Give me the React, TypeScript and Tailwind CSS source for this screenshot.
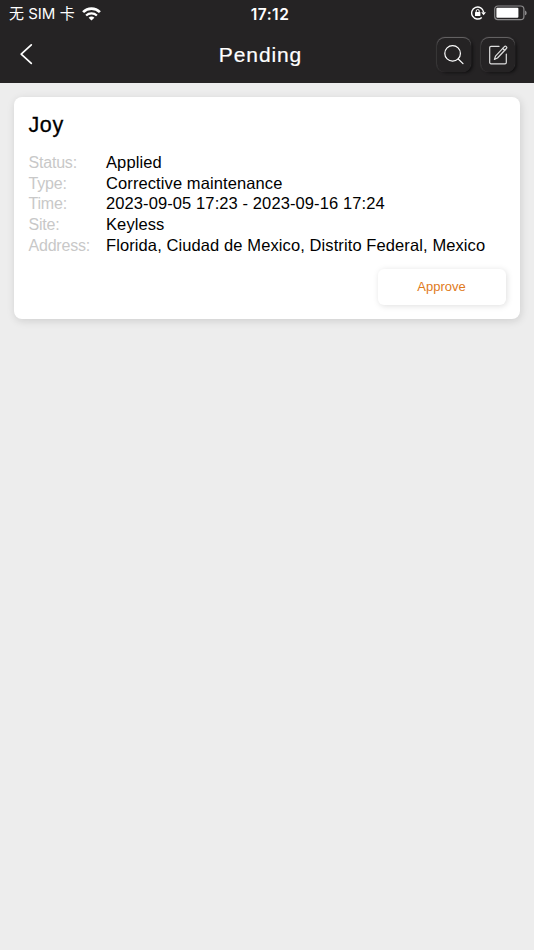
const details = [
  { label: 'Status:', value: 'Applied' },
  { label: 'Type:', value: 'Corrective maintenance' },
  { label: 'Time:', value: '2023-09-05 17:23 - 2023-09-16 17:24' },
  { label: 'Site:', value: 'Keyless' },
  { label: 'Address:', value: 'Florida, Ciudad de Mexico, Distrito Federal, Mexico' },
];

function StatusBar() {
  return (
    <div className="grid h-7 grid-cols-[1fr_auto_1fr] items-center pl-[9px] pr-[7px] text-white">
      <div className="flex items-center gap-[7px]">
        <span className="whitespace-nowrap font-[Inter,'Noto_Sans_CJK_SC',sans-serif] text-[15px] leading-7">
          无 SIM 卡
        </span>
        <svg width="19" height="14" viewBox="0 0 19 14" fill="none" stroke="currentColor" className="-mt-px">
          <path d="M1.1 5.1C5.7.5 13.3.5 17.9 5.1" strokeWidth="2.7" />
          <path d="M4.1 8.5c3-2.9 7.8-2.9 10.8 0" strokeWidth="2.2" />
          <path d="M9.5 13.6 6.6 10.8c1.6-1.6 4.2-1.6 5.8 0Z" fill="currentColor" stroke="none" />
        </svg>
      </div>
      <span className="ml-1 mt-px font-[Inter,sans-serif] text-[15.5px] font-semibold tracking-[0.5px]">17:12</span>
      <div className="flex items-center justify-end gap-2">
        {/* Orientation lock */}
        <svg width="15" height="14" viewBox="0 0 15 14" fill="none" stroke="currentColor" className="-mt-0.5">
          <path d="M12.6 6.2A6 6 0 1 0 10.8 11.4" strokeWidth="1.4" />
          <path d="M10.2 6.2h4.8l-2.4 3.1Z" fill="currentColor" stroke="none" />
          <rect x="4" y="6.1" width="5.4" height="4" rx=".5" fill="currentColor" stroke="none" />
          <path d="M5.2 6.4V5a1.5 1.5 0 0 1 3 0v1.4" strokeWidth="1" />
        </svg>
        {/* Battery */}
        <svg width="33" height="16" viewBox="0 0 33 16" fill="none" className="-mt-0.5">
          <rect x=".7" y="1" width="29.2" height="13.6" rx="3.2" stroke="#8b8a8b" strokeWidth="1.2" />
          <rect x="2.4" y="2.8" width="22" height="10" rx="1" fill="#fff" />
          <path d="M31 5.5c2.2.8 2.2 4 0 4.8Z" fill="#8b8a8b" />
        </svg>
      </div>
    </div>
  );
}

function Header() {
  return (
    <header className="h-[83px] bg-[#252324] text-white">
      <StatusBar />
      <div className="grid h-[54px] grid-cols-[1fr_auto_1fr] items-center pl-[19px] pr-[19px]">
        <button type="button" aria-label="Back" className="-mt-0.5 w-fit">
          <svg width="14" height="22" viewBox="0 0 14 22" fill="none" stroke="currentColor" strokeWidth="1.7" strokeLinecap="round" strokeLinejoin="round">
            <path d="M12.3 1.8 2.2 11.2 12.3 20.4" />
          </svg>
        </button>
        <h1 className="mr-[13px] text-[21px] tracking-[0.9px] [-webkit-text-stroke:0.2px]">Pending</h1>
        <div className="flex justify-end gap-2.5">
          <button
            type="button"
            aria-label="Search"
            className="flex size-[34px] items-center justify-center rounded-lg bg-[#252324] shadow-[0_-1px_1px_#6b696a,-1px_0_1px_#353334,2px_1px_3px_#121112]"
          >
            <svg width="20" height="20" viewBox="0 0 20 20" fill="none" stroke="currentColor" strokeWidth="1.2" strokeLinecap="round">
              <circle cx="8.6" cy="8.4" r="7.8" />
              <path d="m14.2 14 4.8 4.6" />
            </svg>
          </button>
          <button
            type="button"
            aria-label="Edit"
            className="flex size-[34px] items-center justify-center rounded-lg bg-[#252324] shadow-[0_-1px_1px_#6b696a,-1px_0_1px_#353334,2px_1px_3px_#121112]"
          >
            <svg width="20" height="20" viewBox="0 0 20 20" fill="none" stroke="#dedede" strokeWidth="1.2" strokeLinecap="round" strokeLinejoin="round">
              <path d="M11 1.4H3A1.3 1.3 0 0 0 1.7 2.7v14.8A1.3 1.3 0 0 0 3 18.8h14a1.3 1.3 0 0 0 1.3-1.3V9" />
              <path d="M6.4 14.4 7.5 11.2 16.4 1.7a1.3 1.3 0 0 1 2 1.8L9.5 13Z" />
              <path d="m14.7 3.5 2 1.8" />
            </svg>
          </button>
        </div>
      </div>
    </header>
  );
}

export default function App() {
  return (
    <div className="min-h-screen bg-[#ededed] font-['Liberation_Sans',Arial,sans-serif]">
      <Header />

      <main className="px-3.5 pt-3.5">
        <section className="h-[222px] rounded-lg bg-white px-[14.5px] pt-[14px] text-black shadow-[1px_2px_8px_rgba(0,0,0,0.13)]">
          <h2 className="text-[21.5px] leading-7 tracking-[0.6px] [-webkit-text-stroke:0.3px]">Joy</h2>

          <dl className="mt-[13.3px] text-[16.5px] leading-[20.6px]">
            {details.map(({ label, value }) => (
              <div key={label} className="flex h-[20.6px] items-baseline">
                <dt className="w-[77.5px] shrink-0 text-[16px] tracking-[-0.2px] text-[#c8c8c8]">{label}</dt>
                <dd className="whitespace-nowrap tracking-[0.1px]">{value}</dd>
              </div>
            ))}
          </dl>

          <div className="mt-[13.4px] flex justify-end">
            <button
              type="button"
              className="h-9 w-[128px] rounded-md bg-white text-[13px] text-[#e07a1b] shadow-[1px_1px_6px_rgba(0,0,0,0.13)]"
            >
              Approve
            </button>
          </div>
        </section>
      </main>
    </div>
  );
}
